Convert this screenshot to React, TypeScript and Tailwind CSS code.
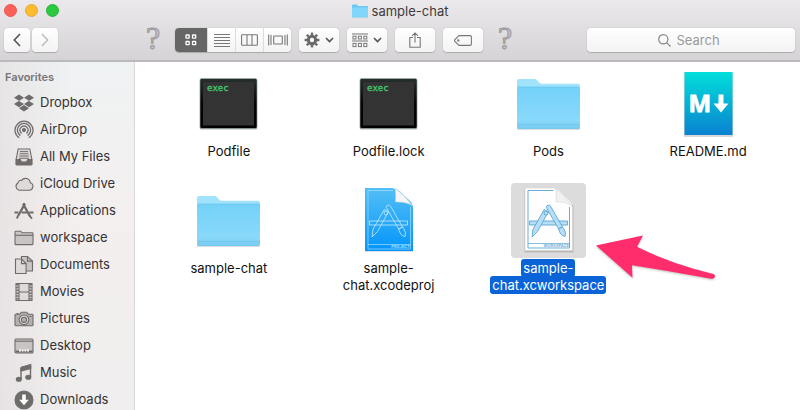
import type { ReactNode } from "react";
import { FaDropbox } from "react-icons/fa";

const toolButton =
  "flex h-6 items-center justify-center rounded bg-gradient-to-b from-white to-[#f3f3f3] text-[#686868] shadow-[0_0_1px_rgba(0,0,0,0.25),0_1px_1px_rgba(0,0,0,0.18)]";
const segment = "flex h-6 w-7 items-center justify-center border-l border-[#dcdcdc]";

function Chevron() {
  return (
    <svg width="9" height="6" viewBox="0 0 9 6" fill="none" stroke="#555" strokeWidth="1.7">
      <path d="M1 1l3.5 3.5L8 1" />
    </svg>
  );
}

function GearIcon() {
  return (
    <svg width="16" height="16" viewBox="0 0 16 16" fill="none" stroke="#686868">
      <circle cx="8" cy="8" r="3.7" strokeWidth="3" />
      {[0, 45, 90, 135, 180, 225, 270, 315].map((a) => (
        <path key={a} d="M8 3V.6" strokeWidth="2.4" transform={`rotate(${a} 8 8)`} />
      ))}
    </svg>
  );
}

function Glyph({ children }: { children: ReactNode }) {
  return (
    <svg
      width="20"
      height="20"
      viewBox="0 0 20 20"
      fill="none"
      stroke="#6f6b6b"
      strokeWidth="1.1"
      aria-hidden="true"
      className="shrink-0"
    >
      {children}
    </svg>
  );
}

const favorites: { name: string; icon: ReactNode }[] = [
  { name: "Dropbox", icon: <FaDropbox size={20} color="#6f6b6b" className="shrink-0" /> },
  {
    name: "AirDrop",
    icon: (
      <Glyph>
        <path d="M5.2 17.8a9 9 0 1 1 9.6 0M6.4 15.6a6.6 6.6 0 1 1 7.2 0M7.6 13.4a4.1 4.1 0 1 1 4.8 0" strokeWidth="1.3" />
        <circle cx="10" cy="10" r="1.5" fill="#6f6b6b" />
      </Glyph>
    ),
  },
  {
    name: "All My Files",
    icon: (
      <Glyph>
        <path d="M4.2 2h11.6l2 10v5.2q0 .8-.8.8H3q-.8 0-.8-.8V12z" fill="#dedada" />
        <path d="M2.2 12.5h4q.6 2.5 2 2.5h3.6q1.4 0 2-2.5h4v5H2.2z" fill="#6f6b6b" />
        <path d="M6 4.6h8M5.6 6.8h8.8M5.3 9h9.4M5 11.2h10" strokeWidth="1" />
      </Glyph>
    ),
  },
  {
    name: "iCloud Drive",
    icon: (
      <Glyph>
        <path d="M5 16.2a3.9 3.9 0 0 1-1-7.2 2.9 2.9 0 0 1 3.6-2.6 4.8 4.8 0 0 1 8.7 2.4 3.8 3.8 0 0 1-1 7.4z" fill="#dedada" />
      </Glyph>
    ),
  },
  {
    name: "Applications",
    icon: (
      <Glyph>
        <path d="M9 2.6l7.2 13.2M11 2.6L4.2 14.8" strokeWidth="2.2" />
        <path d="M4.2 14.5l-1.4 3M15.8 15l2.2 2.6" strokeWidth="1.8" />
        <path d="M.5 11.4h4M7.6 11.4h5.4M15.2 11.4h4.3" strokeWidth="2" />
      </Glyph>
    ),
  },
  {
    name: "workspace",
    icon: (
      <Glyph>
        <path d="M1 16V4q0-.8.8-.8h5l1.3 1.6h10q.9 0 .9.9V16q0 .6-.6.6H1.6Q1 16.6 1 16z" fill="#c9c4c4" />
        <path d="M1 7.3h18" />
      </Glyph>
    ),
  },
  {
    name: "Documents",
    icon: (
      <Glyph>
        <path d="M7.5 1.5h6l5 4.6V16h-11z" fill="#c9c4c4" />
        <path d="M13.5 1.5v4.600h5" />
        <path d="M1.5 4h6l4.600 4.600v9.900H1.5z" fill="#dedada" />
        <path d="M7.5 4v4.600h4.600" />
      </Glyph>
    ),
  },
  {
    name: "Movies",
    icon: (
      <Glyph>
        <path d="M2 1.500h16v17H2z" fill="#dedada" />
        <path d="M5 1.500v17M15 1.500v17M5 10h10" />
        <path d="M3.500 2v16.500M16.500 2v16.500" strokeWidth="2.200" strokeDasharray="1.500 1.300" />
      </Glyph>
    ),
  },
  {
    name: "Pictures",
    icon: (
      <Glyph>
        <path d="M1 16V6q0-.8.8-.8h4l1.500-2h5.400l1.500 2h4q.8 0 .8.800v10q0 .800-.800.800H1.800Q1 16.800 1 16z" fill="#b5b0b0" />
        <circle cx="10" cy="10.800" r="4.800" fill="#dedada" />
        <circle cx="10" cy="10.800" r="2.600" fill="#b5b0b0" />
        <path d="M2.500 4.500h2M15.500 7.500h2" />
      </Glyph>
    ),
  },
  {
    name: "Desktop",
    icon: (
      <Glyph>
        <rect x="1" y="3" width="18" height="14" rx="1" fill="#c9c4c4" />
        <path d="M1 5.200h18" />
        <path d="M1.500 15.500h17" strokeWidth="2" />
        <path d="M5 14.500h10" stroke="#fff" strokeWidth="2" strokeDasharray="1.900 .8" />
      </Glyph>
    ),
  },
  {
    name: "Music",
    icon: (
      <Glyph>
        <path d="M7 4.300L16.800 1.500v4L7 8z" fill="#6f6b6b" />
        <path d="M7 5v11M16.500 3v11" strokeWidth="1.400" />
        <ellipse cx="4.800" cy="16.300" rx="2.500" ry="2" fill="#6f6b6b" />
        <ellipse cx="14.300" cy="14.300" rx="2.500" ry="2" fill="#6f6b6b" />
      </Glyph>
    ),
  },
  {
    name: "Downloads",
    icon: (
      <Glyph>
        <circle cx="10" cy="10" r="9" fill="#6f6b6b" />
        <path d="M8.200 4.500h3.600v5.200h3L10 15.200 5.200 9.700h3z" fill="#fff" stroke="none" />
      </Glyph>
    ),
  },
];

function Art({ children }: { children: ReactNode }) {
  return (
    <svg width="75" height="75" viewBox="0 0 75 75" aria-hidden="true">
      {children}
    </svg>
  );
}

function ExecArt() {
  return (
    <Art>
      <defs>
        <linearGradient id="frame" x2="0" y2="1">
          <stop offset="0" stopColor="#26302f" />
          <stop offset=".5" stopColor="#050505" />
          <stop offset="1" stopColor="#000" />
        </linearGradient>
      </defs>
      <rect x="8.500" y="13" width="58" height="51" rx="2" fill="#000" opacity=".15" />
      <rect x="9" y="12.500" width="57" height="50" rx="1.500" fill="url(#frame)" stroke="#9db0b0" strokeWidth=".6" />
      <rect x="12" y="16" width="51" height="43.500" fill="#333" />
      <text x="16" y="25" fontSize="9" fontFamily="'DejaVu Sans Mono', monospace" fill="#45cf73" stroke="#45cf73" strokeWidth=".3">
        exec
      </text>
    </Art>
  );
}

function FolderArt() {
  return (
    <Art>
      <defs>
        <linearGradient id="folder" x2="0" y2="1">
          <stop offset="0" stopColor="#73d1f8" />
          <stop offset=".8" stopColor="#8ad9fb" />
          <stop offset="1" stopColor="#76c9ee" />
        </linearGradient>
      </defs>
      <path d="M6 60h63v3q0 1-1 1H7q-1 0-1-1z" fill="#000" opacity=".14" />
      <path d="M6 30V15q0-2 2-2h15.500q1.500 0 2.500 1.200l2.300 2.600q1 1 2.500 1H67q2 0 2 2V30z" fill="#a1e2fd" />
      <path d="M6 22.500q0-1.500 1.500-1.500h60q1.500 0 1.500 1.500V61q0 2-2 2H8q-2 0-2-2z" fill="url(#folder)" />
      <path d="M6.500 21h62M6.500 58.500h62" stroke="#64c0e8" strokeWidth=".6" />
    </Art>
  );
}

function MarkdownArt() {
  return (
    <Art>
      <defs>
        <linearGradient id="md" x2="0" y2="1">
          <stop offset="0" stopColor="#02dfdb" />
          <stop offset="1" stopColor="#0a82d0" />
        </linearGradient>
      </defs>
      <rect x="13" y="7" width="49" height="64" fill="#000" opacity=".15" />
      <rect x="13.500" y="6" width="48" height="63" fill="url(#md)" />
      <text x="17.500" y="46" fontSize="24" fontWeight="700" fontFamily="'Open Sans', sans-serif" fill="#fff" stroke="#fff" strokeWidth=".8">
        M
      </text>
      <path d="M47.500 28.500h5v9h5L50 46.500l-7.500-9h5z" fill="#fff" />
    </Art>
  );
}

function CompassTools({ line, fill }: { line: string; fill: string }) {
  return (
    <g stroke={line} fill={fill} strokeWidth=".9">
      <path d="M18.500 38h38v4h-38z" />
      <path d="M33.200 26.500l4.200 2.200L26.500 48.500l-5.500 5.500 1-7.600z" />
      <path d="M35.300 24.500a2.300 2.300 0 0 1 4.300-1.200L51.500 44l-3.800 2z" />
      <path d="M47.700 46l3.800-2 1.500 2q2.500 4 1 7.500-5-1-6.300-7.500z" />
      <circle cx="35" cy="30" r="2" />
    </g>
  );
}

function ProjectArt() {
  return (
    <Art>
      <defs>
        <linearGradient id="project" x2="0" y2="1">
          <stop offset="0" stopColor="#53bff5" />
          <stop offset="1" stopColor="#0395fb" />
        </linearGradient>
      </defs>
      <path d="M14 6h31l17 17v46H14z" fill="#000" opacity=".12" />
      <path d="M14 5h27q4 0 8 3.500l9.500 9Q62 21 62 25v43H14z" fill="url(#project)" />
      <path d="M17 7.500h25M59.500 24v42H17V7.500" fill="none" stroke="#a5dcfc" strokeWidth=".7" />
      <path d="M17 61.500h42.500" stroke="#a5dcfc" strokeWidth=".7" />
      <text x="59" y="65.300" textAnchor="end" fontSize="4" fontWeight="700" fontFamily="Inter, sans-serif" fill="#a5dcfc">
        PROJECT
      </text>
      <CompassTools line="#b9e4fd" fill="none" />
      <path d="M44 5.500q1 3 .5 13.500 10.500-.5 16.500 3.500Q54 12 44 5.500z" fill="#f4f5f6" stroke="#c8d2d8" strokeWidth=".5" />
    </Art>
  );
}

function WorkspaceArt() {
  return (
    <Art>
      <path d="M13.500 6h32l17 17v46.500h-49z" fill="#000" opacity=".15" />
      <path d="M14 5h28q4 0 7.500 3.500l9 9Q61.500 21 61.500 25v42.500H14z" fill="#fefefe" stroke="#cfcfcf" strokeWidth=".5" />
      <path d="M42.500 7.500H17V65h41.500V24" fill="none" stroke="#6dabd6" strokeWidth="1" />
      <path d="M17 60.500h41.500" stroke="#6dabd6" strokeWidth=".8" />
      <text x="58" y="64.300" textAnchor="end" fontSize="4" fontWeight="600" fontFamily="Inter, sans-serif" fill="#6dabd6">
        WORKSPACE
      </text>
      <CompassTools line="#5ea5d3" fill="#b6def8" />
      <path d="M44.500 5.500q1 3 .5 13.500 10-.5 15.500 3.500Q54 12 44.500 5.500z" fill="#f1f1f1" stroke="#cfcfcf" strokeWidth=".5" />
    </Art>
  );
}

const files: { name: string; art: ReactNode; selected?: boolean }[] = [
  { name: "Podfile", art: <ExecArt /> },
  { name: "Podfile.lock", art: <ExecArt /> },
  { name: "Pods", art: <FolderArt /> },
  { name: "README.md", art: <MarkdownArt /> },
  { name: "sample-chat", art: <FolderArt /> },
  { name: "sample-\u200bchat.xcodeproj", art: <ProjectArt /> },
  { name: "sample-\u200bchat.xcworkspace", art: <WorkspaceArt />, selected: true },
];

function HelpButton() {
  return (
    <button
      aria-label="Help"
      className="flex h-6 w-4 items-center justify-center pb-1 font-['Liberation_Serif',serif] text-[32px] leading-6 text-[#c4c1c4] [-webkit-text-stroke:1px_#9b989b]"
    >
      ?
    </button>
  );
}

export default function App() {
  return (
    <div className="flex h-screen flex-col overflow-hidden bg-white font-[Inter,'Liberation_Sans',sans-serif] text-[13px] leading-[17px] text-[#222]">
      <header className="shrink-0 border-b-2 border-[#bcb9bd] bg-gradient-to-b from-[#ebe9eb] to-[#d5d3d6] pb-2">
        <div className="grid h-7 grid-cols-[1fr_auto_1fr] items-start pt-[2px]">
          <div className="flex gap-2 pt-[2px] pl-1">
            <button aria-label="Close" className="size-[13px] rounded-full border border-[#ee544f] bg-[#fc605b]" />
            <button aria-label="Minimize" className="size-[13px] rounded-full border border-[#e5a935] bg-[#fdbc30]" />
            <button aria-label="Zoom" className="size-[13px] rounded-full border border-[#27b539] bg-[#2ac940]" />
          </div>
          <h1 className="flex items-center gap-1 leading-[18px] text-[#3d3b3d]">
            <svg width="16" height="14" viewBox="0 0 16 14" aria-hidden="true">
              <path d="M0 1.500Q0 .5 1 .5h4l1.200 1.500H15q1 0 1 1V12.500q0 1-1 1H1q-1 0-1-1z" fill="#6ac9f3" />
              <path d="M0 3.500h16v9q0 .5-1 .5H1q-1 0-1-.5z" fill="#80d6fb" />
            </svg>
            sample-chat
          </h1>
        </div>
        <div className="flex items-center pr-[5px] pl-1">
          <div className="flex gap-[2px]">
            <button aria-label="Back" className={`${toolButton} w-[26px]`}>
              <svg width="8" height="14" viewBox="0 0 8 14" fill="none" stroke="#555" strokeWidth="1.600">
                <path d="M7 1L1.300 7 7 13" />
              </svg>
            </button>
            <button aria-label="Forward" className={`${toolButton} w-[26px]`}>
              <svg width="8" height="14" viewBox="0 0 8 14" fill="none" stroke="#b9b9b9" strokeWidth="1.400">
                <path d="M1 1l5.700 6L1 13" />
              </svg>
            </button>
          </div>
          <div className="ml-[87px]">
            <HelpButton />
          </div>
          <div className={`${toolButton} ml-[14px] overflow-hidden`}>
            <button aria-label="Icon view" aria-pressed="true" className="flex h-6 w-8 items-center justify-center bg-[#666]">
              <svg width="12" height="12" viewBox="0 0 12 12" fill="none" stroke="#fff" strokeWidth="1.300">
                <rect x="1" y="1" width="3.200" height="3.200" rx=".5" />
                <rect x="7.500" y="1" width="3.200" height="3.200" rx=".5" />
                <rect x="1" y="7.500" width="3.200" height="3.200" rx=".5" />
                <rect x="7.500" y="7.500" width="3.200" height="3.200" rx=".5" />
              </svg>
            </button>
            <button aria-label="List view" aria-pressed="false" className={segment}>
              <svg width="16" height="13" viewBox="0 0 16 13" stroke="#777" strokeWidth="1">
                <path d="M0 .5h16M0 3.500h16M0 6.500h16M0 9.500h16M0 12.500h16" />
              </svg>
            </button>
            <button aria-label="Column view" aria-pressed="false" className={segment}>
              <svg width="17" height="12" viewBox="0 0 17 12" fill="none" stroke="#777" strokeWidth="1.100">
                <rect x=".6" y=".8" width="15.800" height="10.400" rx=".8" />
                <path d="M6 1v10M11 1v10" />
              </svg>
            </button>
            <button aria-label="Cover flow" aria-pressed="false" className={segment}>
              <svg width="20" height="12" viewBox="0 0 20 12" fill="none" stroke="#777" strokeWidth="1.100">
                <rect x="5.700" y="2" width="8.600" height="8" rx=".5" />
                <path d="M.7.500v11M3 1v10M17 1v10M19.300.500v11" />
              </svg>
            </button>
          </div>
          <div className="ml-2 flex gap-2">
            <button aria-label="Actions" className={`${toolButton} w-10 gap-[5px]`}>
              <GearIcon />
              <Chevron />
            </button>
            <button aria-label="Arrange" className={`${toolButton} w-10 gap-[5px]`}>
              <svg width="16" height="15" viewBox="0 0 16 15" fill="none" stroke="#777">
                <path d="M0 1h16M0 8h16" />
                {[1, 6.4, 11.8].map((x) => (
                  <g key={x}>
                    <rect x={x} y="3.200" width="3" height="2.800" />
                    <rect x={x} y="10.400" width="3" height="3.200" />
                  </g>
                ))}
              </svg>
              <Chevron />
            </button>
            <button aria-label="Share" className={`${toolButton} w-10`}>
              <svg width="12" height="16" viewBox="0 0 12 16" fill="none" stroke="#777" strokeWidth="1.100">
                <path d="M4 5.500H.8v9.700h10.400V5.500H8M6 10.500V1M3 3.800L6 .9l3 2.900" />
              </svg>
            </button>
            <button aria-label="Tags" className={`${toolButton} w-10`}>
              <svg width="18" height="11" viewBox="0 0 18 11" fill="none" stroke="#777" strokeWidth="1.100">
                <path d="M5 .6h11q1.400 0 1.400 1.400v7q0 1.400-1.400 1.400H5L.7 6.200q-.5-.7 0-1.400z" />
                <circle cx="4.300" cy="5.500" r=".6" />
              </svg>
            </button>
          </div>
          <div className="ml-[14px]">
            <HelpButton />
          </div>
          <label className={`${toolButton} ml-auto w-[208px] gap-[6px]`}>
            <svg width="13" height="13" viewBox="0 0 13 13" fill="none" stroke="#858585" strokeWidth="1.200">
              <circle cx="5.300" cy="5.300" r="4.600" />
              <path d="M8.700 8.700l3.800 3.800" />
            </svg>
            <input
              type="text"
              aria-label="Search"
              placeholder="Search"
              className="w-12 bg-transparent text-[13px] text-[#444] outline-none placeholder:text-[#9a9a9a]"
            />
          </label>
        </div>
      </header>

      <div className="flex min-h-0 flex-1">
        <nav className="w-[135px] shrink-0 overflow-hidden border-r border-[#dad7d9] bg-[linear-gradient(90deg,rgba(222,216,218,0.5),rgba(222,216,218,0)_55%),linear-gradient(180deg,#eff2f3,#f3efee_45%,#f0eeee)] pt-[7px]">
          <h2 className="pl-[5px] text-[11px] leading-4 font-semibold text-[#767476]">Favorites</h2>
          <ul className="pt-1">
            {favorites.map((f) => (
              <li key={f.name}>
                <a href="#" className="flex h-[27px] items-center gap-[6px] pl-[14px] whitespace-nowrap text-[#343234]">
                  {f.icon}
                  {f.name}
                </a>
              </li>
            ))}
          </ul>
        </nav>

        <main className="min-w-0 flex-1 pt-1 pr-3 pl-[14px]">
          <ul className="grid auto-rows-[117px] grid-cols-4">
            {files.map((f) => (
              <li key={f.name} className="flex justify-center">
                <button className="relative flex flex-col items-center gap-[2px] text-[#111]">
                  <span className={f.selected ? "rounded bg-[#dcdcdc]" : ""}>{f.art}</span>
                  <span className="w-[124px] text-center">
                    <span
                      className={
                        f.selected ? "rounded-[3px] bg-[#0a64d8] box-decoration-clone px-[2px] py-px text-white" : ""
                      }
                    >
                      {f.name}
                    </span>
                  </span>
                  {f.selected && (
                    <svg
                      width="120"
                      height="46"
                      viewBox="0 0 120 46"
                      aria-hidden="true"
                      className="absolute top-[52px] left-[110px] drop-shadow-[0_1px_1px_rgba(0,0,0,0.25)]"
                    >
                      <path d="M0 10.500L47 .5l-6 11.300Q75 29 117.500 39q2.500 1.500 1 3.600-1 1.500-3.500 1.100Q70 35.500 36 30.200l.5 12.500z" fill="#ff2d6c" />
                    </svg>
                  )}
                </button>
              </li>
            ))}
          </ul>
        </main>
      </div>
    </div>
  );
}
